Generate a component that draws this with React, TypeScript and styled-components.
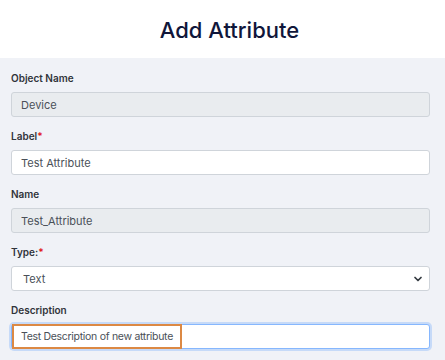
import styled, { createGlobalStyle } from "styled-components";
import { ChevronDown } from "lucide-react";

const GlobalStyle = createGlobalStyle`
  html, body {
    margin: 0;
    padding: 0;
    background: #f0f2f7;
    font-family: Inter, "Noto Sans", sans-serif;
  }
`;

const Page = styled.div`
  width: 445px;
  min-height: 360px;
  background: #f0f2f7;
`;

const Header = styled.header`
  height: 58px;
  background: #ffffff;
  display: flex;
  align-items: center;
  justify-content: center;
  padding-left: 14px;
`;

const Title = styled.h1`
  margin: 0;
  font-size: 22px;
  font-weight: 500;
  color: #10163a;
  padding-top: 2px;
`;

const Body = styled.div`
  padding: 13px 15px 0 11px;
`;

const Field = styled.div`
  display: flex;
  flex-direction: column;
  margin-bottom: 12px;
`;

const Label = styled.label`
  font-size: 10px;
  line-height: 14px;
  font-weight: 600;
  color: #30343a;
  margin-bottom: 7px;
`;

const Required = styled.span`
  color: #e0161b;
`;

const Input = styled.input<{ $readOnly?: boolean; $focused?: boolean }>`
  box-sizing: border-box;
  height: 25px;
  width: 100%;
  padding: 0 9px;
  font-family: inherit;
  font-size: ${(p) => (p.$focused ? "10.5px" : "11px")};
  letter-spacing: ${(p) => (p.$focused ? "-0.3px" : "normal")};
  color: #4a5058;
  background: ${(p) => (p.$readOnly ? "#e9ecef" : "#ffffff")};
  border: 1px solid ${(p) => (p.$focused ? "#86b7fe" : "#cfd4da")};
  border-radius: 3px;
  outline: none;
  box-shadow: ${(p) => (p.$focused ? "0 0 0 2px rgba(13,110,253,0.18)" : "none")};
`;

const SelectWrap = styled.div`
  position: relative;
`;

const Select = styled.select`
  box-sizing: border-box;
  height: 25px;
  width: 100%;
  padding: 0 11px;
  font-family: inherit;
  font-size: 11px;
  color: #4a5058;
  background: #ffffff;
  border: 1px solid #cfd4da;
  border-radius: 3px;
  appearance: none;
  outline: none;
`;

const Chevron = styled(ChevronDown)`
  position: absolute;
  right: 6px;
  top: 7px;
  width: 12px;
  height: 12px;
  color: #343a40;
  pointer-events: none;
`;

const DescWrap = styled.div`
  position: relative;
`;

const Highlight = styled.div`
  position: absolute;
  left: 1px;
  top: 0;
  width: 170px;
  height: 25px;
  box-sizing: border-box;
  border: 2px solid #dc8944;
  pointer-events: none;
`;

export default function App() {
  return (
    <Page>
      <GlobalStyle />
      <Header>
        <Title>Add Attribute</Title>
      </Header>
      <Body>
        <Field>
          <Label>Object Name</Label>
          <Input $readOnly readOnly value="Device" />
        </Field>
        <Field>
          <Label>
            Label<Required>*</Required>
          </Label>
          <Input readOnly value="Test Attribute" />
        </Field>
        <Field>
          <Label>Name</Label>
          <Input $readOnly readOnly value="Test_Attribute" />
        </Field>
        <Field>
          <Label>
            Type:<Required>*</Required>
          </Label>
          <SelectWrap>
            <Select defaultValue="text">
              <option value="text">Text</option>
            </Select>
            <Chevron strokeWidth={3.5} />
          </SelectWrap>
        </Field>
        <Field>
          <Label>Description</Label>
          <DescWrap>
            <Input $focused readOnly value="Test Description of new attribute" />
            <Highlight />
          </DescWrap>
        </Field>
      </Body>
    </Page>
  );
}
